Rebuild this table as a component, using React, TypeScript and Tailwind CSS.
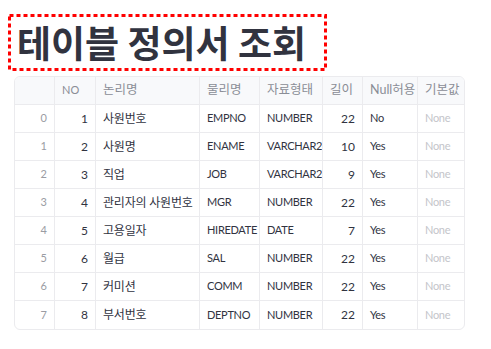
const cols = ["", "NO", "논리명", "물리명", "자료형태", "길이", "Null허용", "기본값"];

const rows = [
  [1, "사원번호", "EMPNO", "NUMBER", 22, "No"],
  [2, "사원명", "ENAME", "VARCHAR2", 10, "Yes"],
  [3, "직업", "JOB", "VARCHAR2", 9, "Yes"],
  [4, "관리자의 사원번호", "MGR", "NUMBER", 22, "Yes"],
  [5, "고용일자", "HIREDATE", "DATE", 7, "Yes"],
  [6, "월급", "SAL", "NUMBER", 22, "Yes"],
  [7, "커미션", "COMM", "NUMBER", 22, "Yes"],
  [8, "부서번호", "DEPTNO", "NUMBER", 22, "Yes"],
];

const grid = "grid grid-cols-[40px_41px_104px_60px_63px_40px_55px_46px]";
const cell = "h-7 flex items-center px-[7px] border-r border-b border-[#ebebee] whitespace-nowrap overflow-hidden";
const latin = "text-[11px] tracking-[-0.3px]";

export default function App() {
  return (
    <div
      className="w-[491px] h-[349px] bg-white text-[#31333f] overflow-hidden"
      style={{ fontFamily: "Lato, 'Noto Sans CJK KR', sans-serif" }}
    >
      <div className="pt-[14px] pl-2">
        {/* dashed red frame round the title */}
        <div className="relative w-[319px] h-[57px] flex items-center pl-[9px]">
          <svg className="absolute inset-0" width="319" height="57" viewBox="0 0 319 57">
            <rect x="1.5" y="1.5" width="316" height="54" fill="none" stroke="#ff0000" strokeWidth="3" strokeDasharray="4 3" />
          </svg>
          <h1
            className="text-[37px] font-bold leading-none text-[#31333f]"
            style={{ fontFamily: "'Noto Sans CJK KR', sans-serif" }}
          >
            테이블 정의서 조회
          </h1>
        </div>
      </div>

      <div className="ml-[14px] mt-[5px] w-[451px] border border-[#ebebee] rounded-md overflow-hidden text-[13px]">
        <div className={`${grid} bg-[#f8f9fb] text-[#8a8d96]`}>
          {cols.map((c, i) => (
            <div
              key={i}
              className={`${cell} ${i === 1 ? "text-[11px]" : "text-[12.5px]"} ${i === 2 ? "px-[6px]" : ""} ${i === 7 ? "border-r-0" : ""}`}
            >
              {c}
            </div>
          ))}
        </div>
        {rows.map((r, ri) => {
          const last = ri === rows.length - 1 ? "border-b-0" : "";
          return (
            <div key={ri} className={grid}>
              <div className={`${cell} justify-end text-[#9a9ca3] text-[11px] ${last}`}>{ri}</div>
              <div className={`${cell} justify-end text-[12px] ${last}`}>{r[0]}</div>
              <div className={`${cell} px-[6px] text-[12px] tracking-[-0.2px] ${last}`}>{r[1]}</div>
              <div className={`${cell} ${latin} ${last}`}>{r[2]}</div>
              <div className={`${cell} ${latin} ${last}`}>{r[3]}</div>
              <div className={`${cell} justify-end text-[12px] ${last}`}>{r[4]}</div>
              <div className={`${cell} ${latin} ${last}`}>{r[5]}</div>
              <div className={`${cell} border-r-0 text-[#c4c5ca] ${latin} ${last}`}>None</div>
            </div>
          );
        })}
      </div>
    </div>
  );
}
